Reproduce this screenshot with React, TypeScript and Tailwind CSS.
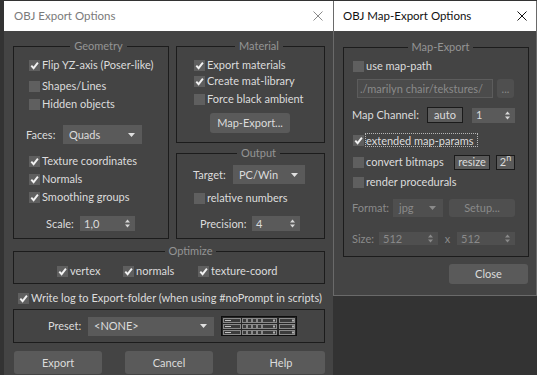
import React from "react";

// 3ds Max style dialogs: OBJ Export Options + OBJ Map-Export Options

function Check({ checked }: { checked?: boolean }) {
  return (
    <span className="w-[11px] h-[11px] bg-[#5f5f5f] flex items-center justify-center shrink-0">
      {checked && (
        <svg width="9" height="9" viewBox="0 0 9 9">
          <path d="M1.3 4.6 L3.6 7.2 L7.9 1.6" stroke="#f2f2f2" strokeWidth="1.9" fill="none" />
        </svg>
      )}
    </span>
  );
}

function CheckRow({
  label,
  checked,
  className = "",
  focus,
}: {
  label: string;
  checked?: boolean;
  className?: string;
  focus?: boolean;
}) {
  return (
    <div className={`flex items-center h-[16px] gap-[1px] whitespace-nowrap ${className}`}>
      <Check checked={checked} />
      <span
        className={
          focus
            ? "border border-dotted border-[#b5b5b5] h-[14px] flex items-center pr-[3px] leading-none"
            : "pl-[1px]"
        }
      >
        {label}
      </span>
    </div>
  );
}

function Group({
  title,
  className = "",
  children,
}: {
  title?: string;
  className?: string;
  children: React.ReactNode;
}) {
  return (
    <fieldset className={`border border-[#1c1c1c] ${className}`}>
      {title && (
        <legend className="mx-auto px-[4px] text-[#949494] leading-[14px]">{title}</legend>
      )}
      {children}
    </fieldset>
  );
}

function Arrows({ color = "#d8d8d8" }: { color?: string }) {
  return (
    <svg width="5" height="9" viewBox="0 0 5 9">
      <path d="M0 3.5 L2.5 0.5 L5 3.5 Z" fill={color} />
      <path d="M0 5.5 L2.5 8.5 L5 5.5 Z" fill={color} />
    </svg>
  );
}

function Spinner({
  value,
  className = "",
  disabled,
}: {
  value: string;
  className?: string;
  disabled?: boolean;
}) {
  return (
    <div
      className={`flex items-center justify-between pl-[4px] pr-[5px] ${
        disabled ? "bg-[#4f4f4f] text-[#8a8a8a]" : "bg-[#5a5a5a]"
      } ${className}`}
    >
      <span>{value}</span>
      <Arrows color={disabled ? "#8a8a8a" : "#d8d8d8"} />
    </div>
  );
}

function Dropdown({
  value,
  className = "",
  disabled,
}: {
  value: string;
  className?: string;
  disabled?: boolean;
}) {
  return (
    <div
      className={`flex items-center justify-between pl-[6px] pr-[7px] ${
        disabled ? "bg-[#4f4f4f] text-[#8a8a8a]" : "bg-[#5a5a5a]"
      } ${className}`}
    >
      <span>{value}</span>
      <svg width="7" height="4" viewBox="0 0 7 4">
        <path d="M0 0 L7 0 L3.5 4 Z" fill={disabled ? "#8a8a8a" : "#e0e0e0"} />
      </svg>
    </div>
  );
}

function Btn({
  label,
  className = "",
  disabled,
}: {
  label: React.ReactNode;
  className?: string;
  disabled?: boolean;
}) {
  return (
    <div
      className={`flex items-center justify-center rounded-[3px] ${
        disabled ? "bg-[#4f4f4f] text-[#8a8a8a]" : "bg-[#5a5a5a]"
      } ${className}`}
    >
      {label}
    </div>
  );
}

function CloseX({ color }: { color: string }) {
  return (
    <svg width="10" height="10" viewBox="0 0 10 10">
      <path d="M0.5 0.5 L9.5 9.5 M9.5 0.5 L0.5 9.5" stroke={color} strokeWidth="1" />
    </svg>
  );
}

function PresetGrid() {
  const rows = [2, 8, 14];
  const box = "#3b3b3b";
  const edge = "#8a8a8a";
  return (
    <svg width="76" height="20" viewBox="0 0 76 20">
      <rect x="0.5" y="0.5" width="75" height="19" fill="#262626" stroke="#0e0e0e" />
      {rows.map((y) => (
        <g key={y}>
          <rect x="2.5" y={y + 0.5} width="17" height="4" fill={box} stroke={edge} />
          <line x1="4" y1={y + 2.5} x2="10" y2={y + 2.5} stroke="#c0c0c0" />
          {[21, 26, 31, 36].map((x) => (
            <rect key={x} x={x + 0.5} y={y + 0.5} width="4" height="4" fill={box} stroke={edge} />
          ))}
          <rect x="41.5" y={y + 0.5} width="14" height="4" fill={box} stroke={edge} />
          <rect x="52" y={y + 1.5} width="2" height="2" fill="#b0b0b0" />
          <rect x="58.5" y={y + 0.5} width="15" height="4" fill={box} stroke={edge} />
          <rect x="71" y={y + 1.5} width="2" height="2" fill="#b0b0b0" />
        </g>
      ))}
    </svg>
  );
}

function ExportDialog() {
  return (
    <div className="ml-[4px] w-[329px] h-[374px] flex flex-col bg-[#444444] shrink-0">
      <div className="h-[30px] bg-white flex items-center justify-between pl-[10px] pr-[10px] text-[#7a7a7a] text-[11.5px]">
        <span>OBJ Export Options</span>
        <CloseX color="#8a8a8a" />
      </div>
      <div className="flex-1 flex flex-col pl-[9px] pr-[8px] pt-[8px]">
        <div className="flex gap-[7px]">
          <Group title="Geometry" className="w-[156px] h-[200px] pl-[15px]">
            <CheckRow className="mt-[4px]" label="Flip YZ-axis (Poser-like)" checked />
            <CheckRow className="mt-[5px]" label="Shapes/Lines" />
            <CheckRow className="mt-[2px]" label="Hidden objects" />
            <div className="mt-[13px] h-[19px] flex items-center ml-[-3px]">
              <span className="w-[37px]">Faces:</span>
              <Dropdown value="Quads" className="w-[79px] h-[19px]" />
            </div>
            <CheckRow className="mt-[9px]" label="Texture coordinates" checked />
            <CheckRow className="mt-[2px]" label="Normals" checked />
            <CheckRow className="mt-[2px]" label="Smoothing groups" checked />
            <div className="mt-[11px] h-[15px] flex items-center ml-[17px]">
              <span className="w-[34px]">Scale:</span>
              <Spinner value="1,0" className="w-[55px] h-[15px]" />
            </div>
          </Group>
          <div className="w-[149px] flex flex-col">
            <Group title="Material" className="h-[104px] pl-[17px]">
              <CheckRow className="mt-[4px]" label="Export materials" checked />
              <CheckRow label="Create mat-library" checked />
              <CheckRow className="mt-[2px]" label="Force black ambient" />
              <Btn label="Map-Export..." className="mt-[6px] ml-[16px] w-[80px] h-[20px]" />
            </Group>
            <Group title="Output" className="mt-[3px] h-[93px] pl-[16px]">
              <div className="mt-[5px] h-[19px] flex items-center">
                <span className="w-[40px]">Target:</span>
                <Dropdown value="PC/Win" className="w-[72px] h-[19px]" />
              </div>
              <CheckRow className="mt-[6px] ml-[1px]" label="relative numbers" />
              <div className="mt-[10px] h-[15px] flex items-center ml-[7px]">
                <span className="w-[52px]">Precision:</span>
                <Spinner value="4" className="w-[48px] h-[15px]" />
              </div>
            </Group>
          </div>
        </div>
        <Group title="Optimize" className="mt-[5px] h-[40px] pl-[43px]">
          <div className="mt-[5px] flex">
            <CheckRow className="w-[66px]" label="vertex" checked />
            <CheckRow className="w-[75px]" label="normals" checked />
            <CheckRow label="texture-coord" checked />
          </div>
        </Group>
        <CheckRow
          className="mt-[6px] ml-[5px]"
          label="Write log to Export-folder (when using #noPrompt in scripts)"
          checked
        />
        <div className="mt-[3px] h-[34px] border border-[#1c1c1c] flex items-center pl-[34px]">
          <span className="w-[40px]">Preset:</span>
          <Dropdown value="<NONE>" className="w-[126px] h-[19px]" />
          <div className="ml-[7px] flex">
            <PresetGrid />
          </div>
        </div>
        <div className="mt-[8px] h-[23px] flex">
          <Btn label="Export" className="ml-[1px] w-[88px] h-[23px]" />
          <Btn label="Cancel" className="ml-[23px] w-[88px] h-[23px]" />
          <Btn label="Help" className="ml-[24px] w-[88px] h-[23px]" />
        </div>
      </div>
    </div>
  );
}

function MapExportDialog() {
  return (
    <div className="w-[204px] h-[295px] flex flex-col border-l border-r border-b border-[#6a6a6a] shrink-0">
      <div className="h-[30px] bg-white flex items-center justify-between pl-[9px] pr-[9px] text-[#111] text-[11.5px]">
        <span>OBJ Map-Export Options</span>
        <CloseX color="#111" />
      </div>
      <div className="flex-1 bg-[#444444] flex flex-col pl-[9px] pr-[7px] pt-[9px]">
        <Group title="Map-Export" className="w-[186px] h-[217px] pl-[9px]">
          <CheckRow className="mt-[4px]" label="use map-path" />
          <div className="mt-[5px] h-[19px] flex items-center">
            <div className="ml-[4px] w-[136px] h-[19px] bg-[#4b4b4b] border border-[#5c5c5c] flex items-center pl-[2px] text-[#8a8a8a] whitespace-nowrap overflow-hidden">
              ./marilyn chair/tekstures/
            </div>
            <Btn label="..." disabled className="ml-[4px] w-[17px] h-[19px] rounded-[2px]" />
          </div>
          <div className="mt-[9px] h-[16px] flex items-center ml-[-1px]">
            <span className="w-[75px]">Map Channel:</span>
            <div className="w-[36px] h-[16px] bg-[#5a5a5a] border border-[#1a1a1a] flex items-center justify-center">
              auto
            </div>
            <Spinner value="1" className="ml-[9px] w-[43px] h-[15px]" />
          </div>
          <CheckRow className="mt-[9px]" label="extended map-params" checked focus />
          <div className="mt-[6px] h-[16px] flex items-center">
            <CheckRow className="w-[101px]" label="convert bitmaps" />
            <div className="w-[36px] h-[15px] bg-[#5a5a5a] border border-[#1a1a1a] flex items-center justify-center">
              resize
            </div>
            <div className="ml-[6px] w-[19px] h-[15px] bg-[#5a5a5a] border border-[#1a1a1a] flex items-center justify-center">
              2<sup className="text-[9px] top-[-4px]">n</sup>
            </div>
          </div>
          <CheckRow className="mt-[4px]" label="render procedurals" />
          <div className="mt-[9px] h-[18px] flex items-center ml-[-1px] text-[#8a8a8a]">
            <span className="w-[41px]">Format:</span>
            <Dropdown value="jpg" disabled className="w-[50px] h-[18px]" />
            <Btn label="Setup..." disabled className="ml-[6px] w-[66px] h-[18px]" />
          </div>
          <div className="mt-[15px] h-[13px] flex items-center ml-[-1px] text-[#8a8a8a]">
            <span className="w-[27px]">Size:</span>
            <Spinner value="512" disabled className="w-[59px] h-[13px]" />
            <span className="w-[19px] text-center">x</span>
            <Spinner value="512" disabled className="w-[58px] h-[13px]" />
          </div>
        </Group>
        <Btn label="Close" className="mt-[7px] ml-[106px] w-[79px] h-[20px]" />
      </div>
    </div>
  );
}

export default function App() {
  return (
    <div className="w-[537px] h-[375px] overflow-hidden bg-[#333333] flex items-start pt-[1px] font-['Lato',sans-serif] text-[11px] text-[#dcdcdc] leading-[16px]">
      <ExportDialog />
      <MapExportDialog />
    </div>
  );
}
